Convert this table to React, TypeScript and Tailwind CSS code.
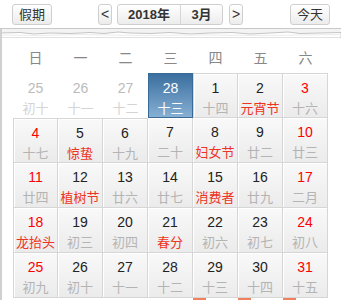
import React from 'react';

type Day = {
    n: number;
    l: string;
    prev?: boolean;
    sel?: boolean;
    wk?: boolean;
    fest?: boolean;
};

const weeks: Day[][] = [
    [
        { n: 25, l: '初十', prev: true },
        { n: 26, l: '十一', prev: true },
        { n: 27, l: '十二', prev: true },
        { n: 28, l: '十三', sel: true },
        { n: 1, l: '十四' },
        { n: 2, l: '元宵节', fest: true },
        { n: 3, l: '十六', wk: true },
    ],
    [
        { n: 4, l: '十七', wk: true },
        { n: 5, l: '惊蛰', fest: true },
        { n: 6, l: '十九' },
        { n: 7, l: '二十' },
        { n: 8, l: '妇女节', fest: true },
        { n: 9, l: '廿二' },
        { n: 10, l: '廿三', wk: true },
    ],
    [
        { n: 11, l: '廿四', wk: true },
        { n: 12, l: '植树节', fest: true },
        { n: 13, l: '廿六' },
        { n: 14, l: '廿七' },
        { n: 15, l: '消费者', fest: true },
        { n: 16, l: '廿九' },
        { n: 17, l: '二月', wk: true },
    ],
    [
        { n: 18, l: '龙抬头', wk: true, fest: true },
        { n: 19, l: '初三' },
        { n: 20, l: '初四' },
        { n: 21, l: '春分', fest: true },
        { n: 22, l: '初六' },
        { n: 23, l: '初七' },
        { n: 24, l: '初八', wk: true },
    ],
    [
        { n: 25, l: '初九', wk: true },
        { n: 26, l: '初十' },
        { n: 27, l: '十一' },
        { n: 28, l: '十二' },
        { n: 29, l: '十三' },
        { n: 30, l: '十四' },
        { n: 31, l: '十五', wk: true },
    ],
];

const weekdays = ['日', '一', '二', '三', '四', '五', '六'];

const font = { fontFamily: '"Liberation Sans", "Noto Sans CJK SC", sans-serif' };

function Btn({ children, className = '' }: { children: React.ReactNode; className?: string }) {
    return (
        <div
            className={`h-[21px] flex items-center justify-center border border-[#cfcfcf] rounded-[3px] bg-gradient-to-b from-white to-[#ececec] text-[13px] text-[#333] ${className}`}
        >
            {children}
        </div>
    );
}

function Cell({ d, row, col }: { d: Day; row: number; col: number }) {
    if (d.prev) {
        return (
            <div className="h-[45px] flex flex-col items-center">
                <span className="mt-[6px] text-[14px] leading-[18px] text-[#bbb]">{d.n}</span>
                <span className="mt-[3px] text-[13px] leading-[18px] text-[#d4d4d4]">{d.l}</span>
            </div>
        );
    }
    if (d.sel) {
        return (
            <div className="h-[45px] flex flex-col items-center border border-[#3a6a96] bg-gradient-to-b from-[#3a6f9f] to-[#86b0d4]">
                <span className="mt-[5px] text-[14px] leading-[18px] text-white">{d.n}</span>
                <span className="mt-[3px] text-[13px] leading-[18px] text-white">{d.l}</span>
            </div>
        );
    }
    const borders = [
        'border-r border-b border-[#d6d6d6]',
        row === 0 || (row === 1 && col < 3) ? 'border-t' : '',
        col === 0 || (row === 0 && col === 4) ? 'border-l' : '',
    ].join(' ');
    return (
        <div
            className={`h-[45px] flex flex-col items-center bg-gradient-to-b from-[#f9f9f9] to-[#ebebeb] shadow-[inset_1px_1px_0_#fff] ${borders}`}
        >
            <span className={`mt-[5px] text-[14px] leading-[18px] ${d.wk ? 'text-[#ff0000]' : 'text-[#222]'}`}>{d.n}</span>
            <span className={`mt-[3px] text-[13px] leading-[18px] ${d.fest ? 'text-[#ee3322]' : 'text-[#b4b4b4]'}`}>{d.l}</span>
        </div>
    );
}

export default function App() {
    return (
        <div className="w-[341px] h-[300px] overflow-hidden bg-white relative" style={font}>
            {/* header */}
            <div className="h-[29px] flex items-start pt-[4px] px-[12px] border-b border-[#c8c8c8] bg-white">
                <div className="flex-1">
                    <Btn className="w-[40px]">假期</Btn>
                </div>
                <div className="flex items-center">
                    <Btn className="w-[14px] text-[14px]">&lt;</Btn>
                    <div className="ml-[5px] flex h-[21px] border border-[#cfcfcf] rounded-[3px] bg-gradient-to-b from-white to-[#ececec] text-[13px] font-bold text-[#333]">
                        <span className="w-[63px] flex items-center justify-center border-r border-[#d6d6d6]">2018年</span>
                        <span className="w-[41px] flex items-center justify-center">3月</span>
                    </div>
                    <Btn className="ml-[6px] w-[14px] text-[14px]">&gt;</Btn>
                </div>
                <div className="flex-1 flex justify-end">
                    <Btn className="w-[40px] mr-[-1px]">今天</Btn>
                </div>
            </div>
            {/* torn paper edge */}
            <svg width="341" height="9" className="block">
                <rect x="0" y="0" width="341" height="9" fill="#f3f3f3" />
                <path
                    d="M0 4 L20 3.5 L34 5 L50 4 L70 4.5 L90 3.5 L104 4.5 L118 3 L130 4 L150 4.5 L170 3.5 L190 5 L210 4 L232 3.5 L250 5 L270 4 L288 3 L300 4.5 L320 4 L341 3.5 L341 9 L0 9 Z"
                    fill="#fff"
                    stroke="#c4c4c4"
                    strokeWidth="1"
                />
                <path d="M0 6 L40 6.5 L80 5.5 L140 6.5 L200 6 L260 6.5 L341 5.5" fill="none" stroke="#ececec" strokeWidth="1" />
            </svg>
            <div className="absolute left-0 top-[29px] bottom-0 w-[2px] bg-[#d0d0d0]" />
            <div className="pl-[13px]">
                <div className="grid grid-cols-[repeat(7,45px)] mt-[6px]">
                    {weekdays.map((w) => (
                        <div key={w} className="h-[29px] flex items-center justify-center text-[14px] text-[#888]">
                            {w}
                        </div>
                    ))}
                </div>
                <div className="grid grid-cols-[repeat(7,45px)]">
                    {weeks.map((wk, r) =>
                        wk.map((d, c) => <Cell key={`${r}-${c}`} d={d} row={r} col={c} />)
                    )}
                </div>
                <div className="grid grid-cols-[repeat(7,45px)]">
                    {[0, 1, 2, 3, 4, 5, 6].map((i) => (
                        <div key={i} className="h-[6px]">
                            {i >= 4 && <div className="w-[13px] h-[6px] bg-[#f08060]" />}
                        </div>
                    ))}
                </div>
            </div>
        </div>
    );
}
